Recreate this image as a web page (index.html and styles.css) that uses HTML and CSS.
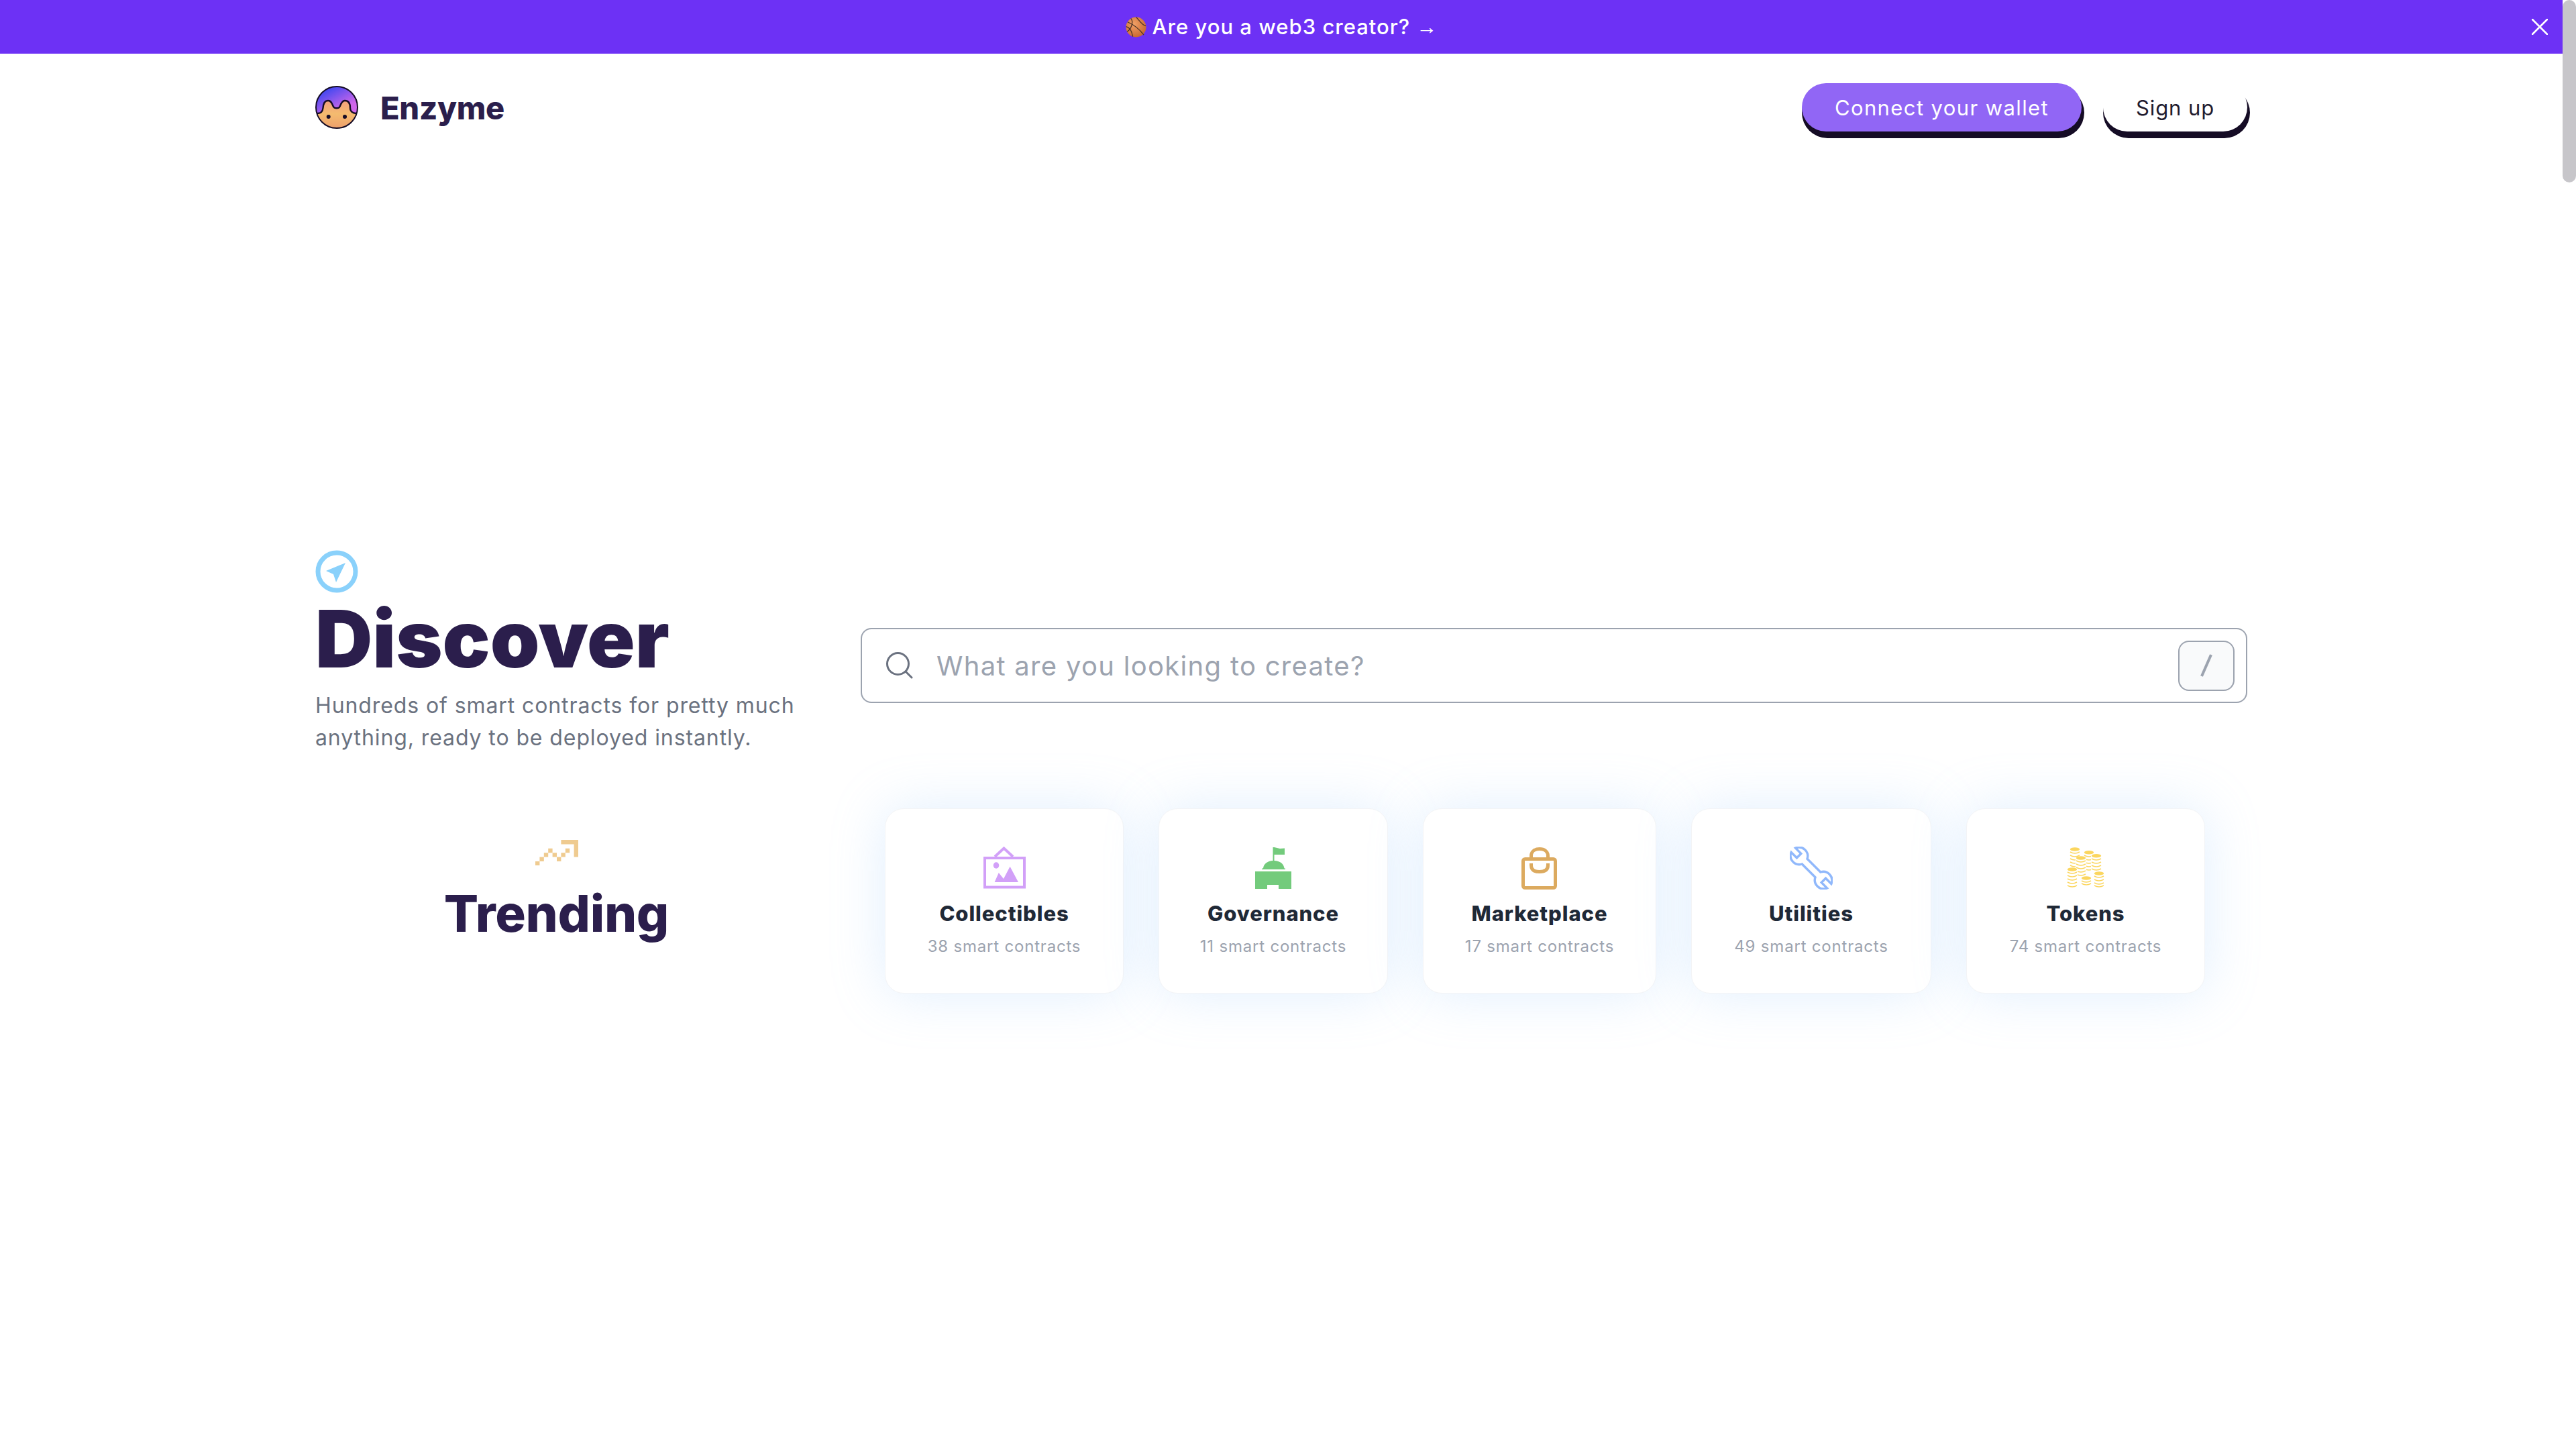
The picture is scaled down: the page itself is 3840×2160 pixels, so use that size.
FILE: index.html
```html
<!DOCTYPE html>
<html lang="en">
<head>
    <meta charset="UTF-8">
    <title>Enzyme</title>
    <link rel="stylesheet" href="styles.css">
</head>
<body>
<div class="page">
    <main class="content">
        <div class="banner">
            <svg class="ball" viewBox="0 0 32 32">
                <defs>
                    <radialGradient id="ballFill" cx="0.4" cy="0.35" r="0.75">
                        <stop offset="0" stop-color="#f0a066"/>
                        <stop offset="1" stop-color="#c4622a"/>
                    </radialGradient>
                </defs>
                <circle cx="16" cy="16" r="15.5" fill="url(#ballFill)"/>
                <path d="M3 8 C12 12 22 20 28 28 M16 .5 C22 6 24 12 31 14 M8 2.5 C13 8 8 20 2 23 M.8 15 C6 16 9 20 11 30.5" fill="none" stroke="#4a3328" stroke-width="1.3"/>
            </svg>
            <span>Are you a web3 creator? <span class="arrow">→</span></span>
            <button class="close" aria-label="Close">
                <svg viewBox="0 0 24 24"><path d="M1 1 L23 23 M23 1 L1 23"/></svg>
            </button>
        </div>

        <div class="container">
            <header class="topnav">
                <a class="brand">
                    <svg class="logo" viewBox="0 0 64 64">
                        <defs>
                            <linearGradient id="logoTop" x1="0.3" y1="0.1" x2="0.8" y2="0.7">
                                <stop offset="0" stop-color="#4348f0"/>
                                <stop offset="1" stop-color="#cf66ea"/>
                            </linearGradient>
                            <linearGradient id="logoBottom" x1="0" y1="0" x2="0" y2="1">
                                <stop offset="0" stop-color="#f3818f"/>
                                <stop offset="0.65" stop-color="#f4bb6f"/>
                                <stop offset="1" stop-color="#ee9f6c"/>
                            </linearGradient>
                            <clipPath id="logoClip"><circle cx="32" cy="32" r="31"/></clipPath>
                        </defs>
                        <g clip-path="url(#logoClip)">
                            <rect width="64" height="64" fill="url(#logoBottom)"/>
                            <path d="M0 41 H3.5 C8 41 11 38 11.5 33 C12 26 15 22 19 22 C24 22 25 27 27 31 C28.5 34 35 34 36.5 31 C38 27 40 22 44 22 C49 22 52 26 52 33 C52 38 56 41 60.5 41 H64 V0 H0 Z" fill="url(#logoTop)"/>
                            <path d="M0 41 H3.5 C8 41 11 38 11.5 33 C12 26 15 22 19 22 C24 22 25 27 27 31 C28.5 34 35 34 36.5 31 C38 27 40 22 44 22 C49 22 52 26 52 33 C52 38 56 41 60.5 41 H64" fill="none" stroke="#150c25" stroke-width="2.4"/>
                        </g>
                        <circle cx="32" cy="32" r="31" fill="none" stroke="#150c25" stroke-width="2"/>
                        <circle cx="19.7" cy="46" r="3" fill="#150c25"/>
                        <circle cx="44" cy="46" r="3" fill="#150c25"/>
                    </svg>
                    <span class="brand-name">Enzyme</span>
                </a>
                <div class="actions">
                    <button class="btn btn-primary">Connect your wallet</button>
                    <button class="btn btn-plain">Sign up</button>
                </div>
            </header>

            <section class="hero">
                <div class="intro">
                    <svg class="compass" viewBox="0 0 64 64">
                        <circle cx="32" cy="32" r="28" fill="none" stroke="#8ad1fb" stroke-width="7"/>
                        <path d="M45 19 L16 31 L27 36 L31 48 Z" fill="#8ad1fb"/>
                    </svg>
                    <h1>Discover</h1>
                    <p>Hundreds of smart contracts for pretty much<br>anything, ready to be deployed instantly.</p>
                </div>
                <div class="search">
                    <svg class="search-icon" viewBox="0 0 40 40">
                        <circle cx="17.5" cy="17.5" r="16" fill="none"/>
                        <path d="M29 29 L38 38" fill="none"/>
                    </svg>
                    <input type="text" placeholder="What are you looking to create?">
                    <span class="key"><svg viewBox="0 0 20 34"><path d="M17 1 L3 33"/></svg></span>
                </div>
            </section>

            <section class="trending">
                <div class="trending-title">
                    <svg class="trend-icon" viewBox="0 0 10 6">
                        <path d="M0 5h1v1H0z M1 4h1v1H1z M2 3h1v1H2z M3 2h1v1H3z M4 3h1v1H4z M5 4h1v1H5z M6 3h1v1H6z M7 2h1v1H7z M6 0h4v1H6z M9 0h1v4H9z"/>
                    </svg>
                    <h2>Trending</h2>
                </div>
                <div class="cards">
                    <div class="card">
                        <svg class="card-icon" viewBox="0 0 64 64">
                            <path d="M18 15 L31.5 2.5 L45 15" fill="none" stroke="#d2a0f8" stroke-width="4"/>
                            <rect x="3" y="17" width="59" height="43.5" fill="none" stroke="#d2a0f8" stroke-width="4"/>
                            <ellipse cx="20" cy="28" rx="4.3" ry="4.7" fill="#d2a0f8"/>
                            <path d="M17.6 53 L23.8 39 L31 48 L40.6 29.7 L53 53 Z" fill="#d2a0f8"/>
                        </svg>
                        <h3>Collectibles</h3>
                        <span>38 smart contracts</span>
                    </div>
                    <div class="card">
                        <svg class="card-icon" viewBox="0 0 64 64" fill="#73cb7c">
                            <path d="M5 37 H59 V63 H40 V57 H23 V63 H5 Z"/>
                            <path d="M15 34 H50 V32.5 H48.5 C48 26 42 21 33.5 21 V12 H49 V2.5 L42 3 L33.5 1 H31.5 V21 C23 21.5 17.5 26 17 32.5 H15 Z"/>
                        </svg>
                        <h3>Governance</h3>
                        <span>11 smart contracts</span>
                    </div>
                    <div class="card">
                        <svg class="card-icon" viewBox="0 0 64 64" fill="none" stroke="#dcaa5f" stroke-width="5">
                            <rect x="7.5" y="18.5" width="48" height="43" rx="3"/>
                            <path d="M19.5 18 V14 C19.5 7 25 3.5 32 3.5 C39 3.5 44.5 7 44.5 14 V18"/>
                            <path d="M19.5 25 V28 C19.5 35 25 37.5 32 37.5 C39 37.5 44.5 35 44.5 28 V25"/>
                        </svg>
                        <h3>Marketplace</h3>
                        <span>17 smart contracts</span>
                    </div>
                    <div class="card">
                        <svg class="card-icon" viewBox="0 0 64 64">
                            <g transform="translate(32 32) rotate(45)">
                                <path d="M-37.7 4.5 A13 13 0 0 0 -14 5.5 L14 5.5 A13 13 0 0 0 37.7 4.5 L26 4.5 L26 -4.5 L37.7 -4.5 A13 13 0 0 0 14 -5.5 L-14 -5.5 A13 13 0 0 0 -37.7 -4.5 L-26 -4.5 L-26 4.5 Z" fill="#fff" stroke="#90b8fb" stroke-width="3.4"/>
                            </g>
                        </svg>
                        <h3>Utilities</h3>
                        <span>49 smart contracts</span>
                    </div>
                    <div class="card">
                        <svg class="card-icon coins" viewBox="0 0 64 64">
                            <!-- stacks, back to front -->
                            <rect class="gap" x="8" y="4" width="16" height="27"/>
                            <ellipse cx="16" cy="4" rx="7.2" ry="2.8"/>
                            <path d="M9 8 q7 4 14 0 m-14 5 q7 4 14 0 m-14 5 q7 4 14 0 m-14 5 q7 4 14 0 m-14 5 q7 4 14 0"/>
                            <rect class="gap" x="29" y="9" width="16" height="30"/>
                            <ellipse cx="37" cy="8.7" rx="7.2" ry="2.8"/>
                            <path d="M30 13 q7 4 14 0 m-14 5 q7 4 14 0 m-14 5 q7 4 14 0 m-14 5 q7 4 14 0 m-14 5 q7 4 14 0"/>
                            <rect class="gap" x="40" y="13" width="16" height="26"/>
                            <ellipse cx="48" cy="13.7" rx="7.2" ry="2.8"/>
                            <path d="M41 18 q7 4 14 0 m-14 5 q7 4 14 0 m-14 5 q7 4 14 0 m-14 5 q7 4 14 0"/>
                            <rect class="gap" x="17" y="17" width="16" height="29"/>
                            <ellipse cx="25" cy="17" rx="7.2" ry="2.8"/>
                            <path d="M18 21 q7 4 14 0 m-14 5 q7 4 14 0 m-14 5 q7 4 14 0 m-14 5 q7 4 14 0 m-14 5 q7 4 14 0"/>
                            <rect class="gap" x="4" y="34" width="16" height="30"/>
                            <ellipse cx="12" cy="34" rx="7.2" ry="2.8"/>
                            <path d="M5 38 q7 4 14 0 m-14 5 q7 4 14 0 m-14 5 q7 4 14 0 m-14 5 q7 4 14 0 m-14 5 q7 4 14 0"/>
                            <rect class="gap" x="25" y="47" width="16" height="14"/>
                            <ellipse cx="33" cy="47" rx="7.2" ry="2.8"/>
                            <path d="M26 51 q7 4 14 0 m-14 4 q7 4 14 0"/>
                            <rect class="gap" x="44" y="40" width="16" height="23"/>
                            <ellipse cx="52" cy="40" rx="7.2" ry="2.8"/>
                            <path d="M45 44 q7 4 14 0 m-14 5 q7 4 14 0 m-14 5 q7 4 14 0 m-14 4 q7 4 14 0"/>
                        </svg>
                        <h3>Tokens</h3>
                        <span>74 smart contracts</span>
                    </div>
                </div>
            </section>
        </div>
    </main>
    <div class="scrollbar"><div class="thumb"></div></div>
</div>
</body>
</html>
```

FILE: styles.css
```css
* {
    box-sizing: border-box;
}
html, body {
    height: 100%;
}
body {
    margin: 0;
    overflow: hidden;
    background-color: #fff;
    font-family: Inter, "Noto Sans", sans-serif;
    color: #2b1e4c;
}
h1, h2, h3, p {
    margin: 0;
}
svg {
    display: block;
}

.page {
    display: flex;
    height: 100%;
}
.content {
    flex: 1;
}
.scrollbar {
    width: 20px;
}
.thumb {
    height: 272px;
    border-radius: 10px;
    background-color: #c7c6ca;
}

/* banner */
.banner {
    position: relative;
    height: 80px;
    display: flex;
    align-items: center;
    justify-content: center;
    gap: 9px;
    background-color: #6d31f5;
    color: #fff;
    font-size: 31px;
    font-weight: 500;
    letter-spacing: 1px;
}
.arrow {
    font-family: "Liberation Sans", sans-serif;
    font-weight: 400;
    letter-spacing: 0;
}
.ball {
    width: 31px;
    height: 31px;
}
.close {
    position: absolute;
    top: 28px;
    right: 22px;
    width: 24px;
    height: 24px;
    padding: 0;
    border: none;
    background: none;
}
.close path {
    stroke: #fff;
    stroke-width: 2.6;
    stroke-linecap: round;
}

/* top nav */
.container {
    width: 2880px;
    margin: 0 auto;
}
.topnav {
    display: flex;
    justify-content: space-between;
    align-items: center;
    padding-top: 44px;
}
.brand {
    display: flex;
    align-items: center;
    gap: 33px;
}
.logo {
    width: 64px;
    height: 64px;
}
.brand-name {
    font-size: 47px;
    font-weight: 800;
    letter-spacing: -0.3px;
}
.actions {
    display: flex;
    gap: 32px;
}
.btn {
    height: 72px;
    padding: 0;
    border: none;
    border-radius: 36px;
    font-family: inherit;
    font-size: 31px;
    box-shadow: 2px 8px 0 2px #150c25;
}
.btn-primary {
    width: 417px;
    background-color: #9166f5;
    color: #fff;
    letter-spacing: 1.4px;
}
.btn-plain {
    width: 215px;
    background-color: #fff;
    color: #1f1b2e;
    letter-spacing: 0.9px;
}

/* discover */
.hero {
    display: flex;
    align-items: flex-start;
    margin-top: 624px;
}
.intro {
    width: 813px;
}
.compass {
    width: 64px;
    height: 64px;
}
h1 {
    margin-top: 6px;
    font-size: 118px;
    font-weight: 900;
    line-height: 124px;
    letter-spacing: 0;
}
.intro p {
    margin-top: 14px;
    font-size: 32px;
    line-height: 48px;
    letter-spacing: 0.9px;
    color: #6b7280;
}
.search {
    flex: 1;
    height: 112px;
    margin-top: 116px;
    padding: 0 17px 0 36px;
    display: flex;
    align-items: center;
    gap: 35px;
    border: 2px solid #9ca3af;
    border-radius: 16px;
}
.search-icon {
    width: 40px;
    height: 40px;
    stroke: #6b7280;
    stroke-width: 3;
    stroke-linecap: round;
}
.search input {
    flex: 1;
    border: none;
    outline: none;
    padding: 0;
    font-family: inherit;
    font-size: 40px;
    letter-spacing: 1.3px;
}
.search input::placeholder {
    color: #9ca3af;
}
.key {
    width: 84px;
    height: 75px;
    display: flex;
    align-items: center;
    justify-content: center;
    border: 2px solid #9ca3af;
    border-radius: 16px;
    background-color: #f9fafb;
}
.key svg {
    width: 20px;
    height: 34px;
    stroke: #9ca3af;
    stroke-width: 4;
}

/* trending */
.trending {
    display: flex;
    align-items: flex-start;
    margin-top: 81px;
}
.trending-title {
    width: 719px;
    display: flex;
    flex-direction: column;
    align-items: center;
    padding-top: 47px;
}
.trend-icon {
    width: 64px;
    height: 38.4px;
    fill: #efcb90;
}
h2 {
    margin-top: 26px;
    font-size: 76px;
    font-weight: 800;
    line-height: 90px;
    letter-spacing: -0.3px;
}
.cards {
    margin-left: 130px;
    display: grid;
    grid-template-columns: 356px 342px 348px 358px 356px;
    gap: 52px;
}
.card {
    height: 276px;
    padding-top: 56px;
    display: flex;
    flex-direction: column;
    align-items: center;
    border: 1px solid #f3f4f6;
    border-radius: 28px;
    background-color: #fff;
    box-shadow: 0 0 80px rgba(147, 197, 253, 0.28);
}
.card-icon {
    width: 64px;
    height: 64px;
}
.card h3 {
    margin-top: 14px;
    font-size: 31px;
    font-weight: 800;
    line-height: 44px;
    letter-spacing: 0.9px;
    color: #1f2937;
}
.card span {
    margin-top: 11px;
    font-size: 24px;
    line-height: 32px;
    letter-spacing: 0.8px;
    color: #9ca3af;
}
.coins ellipse {
    fill: #fbd65f;
}
.coins path {
    fill: none;
    stroke: #fbd65f;
    stroke-width: 1.5;
}
.coins .gap {
    fill: #fff;
}
```
